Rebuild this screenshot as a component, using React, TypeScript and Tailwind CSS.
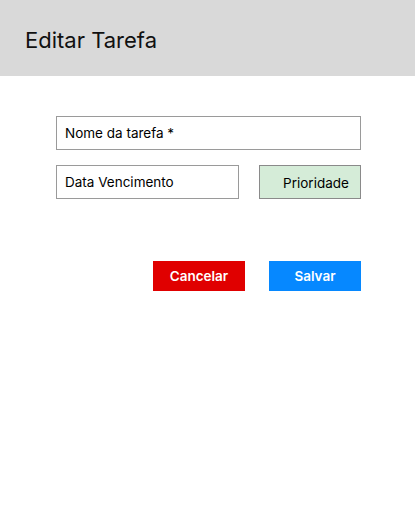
export default function App() {
  return (
    <div className="w-[415px] h-[518px] bg-white text-black" style={{ fontFamily: 'Inter, "Noto Sans", sans-serif' }}>
      {/* Header */}
      <header className="h-[76px] bg-[#d9d9d9] flex items-center px-[25px] pt-[5px]">
        <h1 className="text-[22px] font-normal text-[#111]">Editar Tarefa</h1>
      </header>

      {/* Form */}
      <div className="ml-[56px] w-[305px] mt-[40px] flex flex-col">
        <div className="h-[34px] border border-[#9a9a9a] flex items-center px-[8px] text-[13.5px]">
          Nome da tarefa *
        </div>
        <div className="mt-[15px] flex gap-[20px]">
          <div className="w-[183px] h-[34px] border border-[#9a9a9a] flex items-center px-[8px] text-[13.5px]">
            Data Vencimento
          </div>
          <div className="w-[102px] h-[34px] border border-[#8a8a8a] bg-[#d5ecd8] flex items-center justify-center pl-[12px] pt-[3px] text-[13.5px]">
            Prioridade
          </div>
        </div>

        <div className="mt-[62px] flex justify-end gap-[24px]">
          <button className="w-[92px] h-[30px] bg-[#e00000] text-white text-[13.5px] font-semibold">
            Cancelar
          </button>
          <button className="w-[92px] h-[30px] bg-[#0688ff] text-white text-[13.5px] font-semibold">
            Salvar
          </button>
        </div>
      </div>
    </div>
  );
}
